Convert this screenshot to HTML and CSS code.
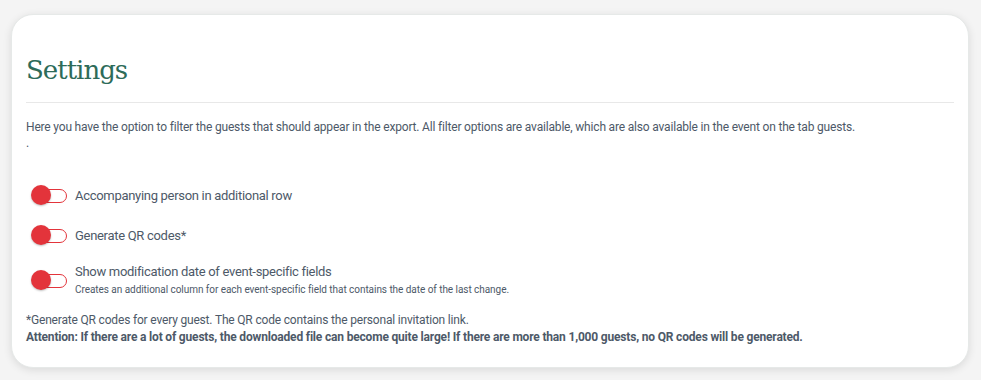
FILE: index.html
```html
<!DOCTYPE html>
<html lang="en">

<head>
	<meta charset="UTF-8">
	<meta name="viewport" content="width=device-width, initial-scale=1.0">
	<title>Export Settings</title>
	<link rel="stylesheet" href="styles.css">
</head>

<body>
	<div class="card">
		<h2 class="card-title">Settings</h2>
		<p class="intro">Here you have the option to filter the guests that should appear in the export. All filter options are available, which are also available in the event on the tab guests.<br>.</p>

		<div class="options">
			<label class="option">
				<span class="switch"><span class="knob"></span></span>
				<span class="option-text">Accompanying person in additional row</span>
			</label>
			<label class="option">
				<span class="switch"><span class="knob"></span></span>
				<span class="option-text">Generate QR codes*</span>
			</label>
			<label class="option">
				<span class="switch"><span class="knob"></span></span>
				<span class="option-text">Show modification date of event-specific fields
					<small class="option-hint">Creates an additional column for each event-specific field that contains the date of the last change.</small>
				</span>
			</label>
		</div>

		<p class="note">*Generate QR codes for every guest. The QR code contains the personal invitation link.<br>
			<strong>Attention: If there are a lot of guests, the downloaded file can become quite large! If there are more than 1,000 guests, no QR codes will be generated.</strong></p>
	</div>
</body>

</html>
```
FILE: styles.css
```css
body {
	margin: 0;
	padding: 14px 12px 14px 11px;
	background-color: #f4f4f4;
	font-family: "Roboto", "Liberation Sans", sans-serif;
	color: #4d5968;
}

.card {
	background-color: #fff;
	border-radius: 22px;
	box-shadow: 0 2px 8px rgba(0, 0, 0, 0.11);
	border: 1px solid #e6e9e8;
	padding: 35px 14px 21px 14px;
}

.card-title {
	margin: 0;
	font-family: "DejaVu Serif", "Liberation Serif", serif;
	font-weight: normal;
	font-size: 26px;
	line-height: 40px;
	letter-spacing: -1px;
	color: #2d6b59;
	padding-bottom: 12px;
	border-bottom: 1px solid #e8e8e8;
}

.intro {
	margin: 16px 0 0;
	font-size: 12px;
	line-height: 16px;
	letter-spacing: -0.18px;
}

.options {
	display: flex;
	flex-direction: column;
	gap: 14px;
	margin-top: 32px;
}

.option {
	display: flex;
	align-items: center;
	gap: 8px;
	min-height: 26px;
	font-size: 13px;
	line-height: 18px;
	letter-spacing: -0.3px;
	cursor: pointer;
}

.switch {
	position: relative;
	flex: none;
	width: 33px;
	height: 12px;
	margin-left: 6px;
	border: 1px solid #e3343b;
	border-radius: 8px;
	background-color: #fff;
}

.knob {
	position: absolute;
	left: -2px;
	top: -5px;
	width: 20px;
	height: 20px;
	border-radius: 50%;
	background-color: #e3343b;
	box-shadow: 0 1px 2px rgba(0, 0, 0, 0.25);
}

.option-text {
	display: flex;
	flex-direction: column;
}

.option-hint {
	font-size: 10px;
	line-height: 18px;
	letter-spacing: -0.05px;
}

.note {
	margin: 13px 0 0;
	font-size: 12px;
	line-height: 17px;
	letter-spacing: -0.18px;
}
```
